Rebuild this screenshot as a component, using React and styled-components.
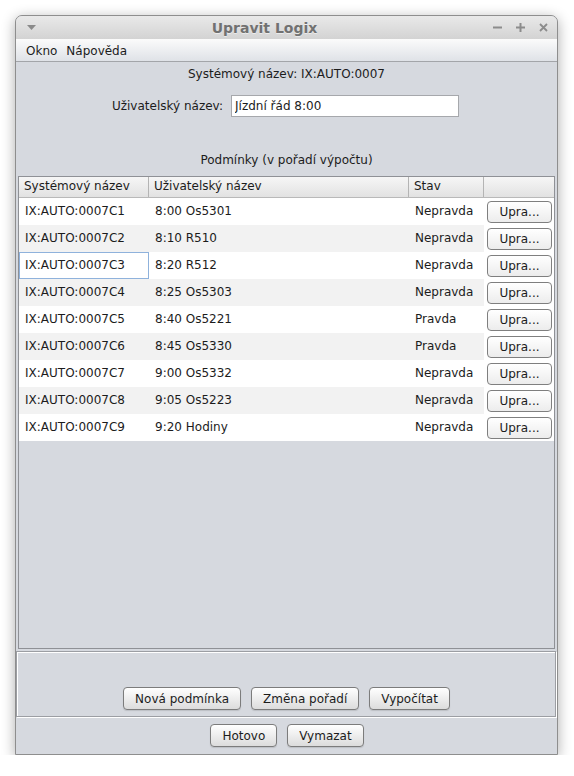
import React from "react";
import styled, { createGlobalStyle } from "styled-components";

const conditions = [
  { id: "IX:AUTO:0007C1", name: "8:00 Os5301", state: "Nepravda" },
  { id: "IX:AUTO:0007C2", name: "8:10 R510", state: "Nepravda" },
  { id: "IX:AUTO:0007C3", name: "8:20 R512", state: "Nepravda", focused: true },
  { id: "IX:AUTO:0007C4", name: "8:25 Os5303", state: "Nepravda" },
  { id: "IX:AUTO:0007C5", name: "8:40 Os5221", state: "Pravda" },
  { id: "IX:AUTO:0007C6", name: "8:45 Os5330", state: "Pravda" },
  { id: "IX:AUTO:0007C7", name: "9:00 Os5332", state: "Nepravda" },
  { id: "IX:AUTO:0007C8", name: "9:05 Os5223", state: "Nepravda" },
  { id: "IX:AUTO:0007C9", name: "9:20 Hodiny", state: "Nepravda" },
];

const columns = ["Systémový název", "Uživatelský název", "Stav", ""];

const App = () => {
  return (
    <>
      <GlobalStyle />
      <Stage>
        <Frame>
          <TitleBar>
            <TitleLeft>
              <svg width="9" height="6" viewBox="0 0 9 6">
                <path d="M0 0 L9 0 L4.5 5 Z" fill="#8a8a8a" />
              </svg>
            </TitleLeft>
            <TitleText>Upravit Logix</TitleText>
            <TitleControls>
              <svg width="9" height="9" viewBox="0 0 9 9">
                <path d="M0 4.5 H9" stroke="#8c8c8c" strokeWidth="2" />
              </svg>
              <svg width="9" height="9" viewBox="0 0 9 9">
                <path d="M0 4.5 H9 M4.5 0 V9" stroke="#8c8c8c" strokeWidth="2" />
              </svg>
              <svg width="9" height="9" viewBox="0 0 9 9">
                <path d="M1 1 L8 8 M8 1 L1 8" stroke="#8c8c8c" strokeWidth="1.8" />
              </svg>
            </TitleControls>
          </TitleBar>

          <MenuBar>
            <MenuItem>Okno</MenuItem>
            <MenuItem>Nápověda</MenuItem>
          </MenuBar>

          <Content>
            <SystemRow>Systémový název: IX:AUTO:0007</SystemRow>
            <FieldRow>
              <FieldLabel>Uživatelský název:</FieldLabel>
              <TextField defaultValue="Jízdní řád 8:00" />
            </FieldRow>
            <Caption>Podmínky (v pořadí výpočtu)</Caption>

            <ScrollPane>
              <HeaderRow>
                {columns.map((c, i) => (
                  <HeaderCell key={i} $w={widths[i]}>
                    {c}
                  </HeaderCell>
                ))}
              </HeaderRow>
              {conditions.map((row, i) => (
                <Row key={row.id} $alt={i % 2 === 1}>
                  <Cell $w={widths[0]} $focused={row.focused}>
                    {row.id}
                  </Cell>
                  <Cell $w={widths[1]}>{row.name}</Cell>
                  <Cell $w={widths[2]}>{row.state}</Cell>
                  <ButtonCell $w={widths[3]}>
                    <EditButton>Upra...</EditButton>
                  </ButtonCell>
                </Row>
              ))}
            </ScrollPane>

            <ActionPanel>
              <Button>Nová podmínka</Button>
              <Button>Změna pořadí</Button>
              <Button>Vypočítat</Button>
            </ActionPanel>

            <Footer>
              <Button>Hotovo</Button>
              <Button>Vymazat</Button>
            </Footer>
          </Content>
        </Frame>
      </Stage>
    </>
  );
};

export default App;

const widths = [130, 260, 75, 70];

const GlobalStyle = createGlobalStyle`
  html, body {
    margin: 0;
    background: #ffffff;
  }

  body {
    font-family: "DejaVu Sans", Verdana, sans-serif;
    font-size: 12px;
    color: #1c1c1c;
  }
`;

const Stage = styled.div`
  padding: 15px 0 0 15px;
`;

const Frame = styled.div`
  width: 543px;
  height: 740px;
  box-sizing: border-box;
  display: flex;
  flex-direction: column;
  overflow: hidden;

  background: #d6d9df;
  border: 1px solid #8e8e8e;
  border-radius: 7px 7px 0 0;
  box-shadow: 0 3px 14px rgba(0, 0, 0, 0.33);
`;

const TitleBar = styled.div`
  height: 23px;
  flex-shrink: 0;
  display: grid;
  grid-template-columns: 1fr auto 1fr;
  align-items: center;

  background: linear-gradient(#e9e9e9, #d3d3d3);
`;

const TitleLeft = styled.div`
  display: flex;
  align-items: center;
  padding-left: 11px;
  padding-top: 1px;
`;

const TitleText = styled.div`
  margin-right: 44px;
  font-size: 14px;
  font-weight: bold;
  color: #717171;
  text-shadow: 0 1px 0 rgba(255, 255, 255, 0.5);
`;

const TitleControls = styled.div`
  display: flex;
  justify-content: flex-end;
  align-items: center;
  column-gap: 14px;
  padding-right: 9px;
`;

const MenuBar = styled.div`
  height: 22px;
  flex-shrink: 0;
  display: flex;
  align-items: center;
  column-gap: 9px;
  padding-left: 10px;

  background: linear-gradient(#fbfbfb, #dfe2e7);
  border-bottom: 1px solid #a3a5a9;
`;

const MenuItem = styled.span`
  line-height: 16px;
  padding-top: 1px;
`;

const Content = styled.div`
  flex: 1;
  display: flex;
  flex-direction: column;
  padding-top: 4px;
`;

const SystemRow = styled.div`
  height: 16px;
  line-height: 16px;
  text-align: center;
`;

const FieldRow = styled.div`
  margin-top: 13px;
  height: 22px;
  display: flex;
  justify-content: center;
  align-items: center;
  column-gap: 8px;
  padding-right: 2px;
`;

const FieldLabel = styled.label`
  line-height: 16px;
`;

const TextField = styled.input`
  width: 228px;
  height: 22px;
  box-sizing: border-box;
  padding: 0 3px;
  margin: 0;

  font: inherit;
  color: #1c1c1c;
  background: #ffffff;
  border: 1px solid #a6a8ac;
  outline: none;
`;

const Caption = styled.div`
  margin-top: 35px;
  height: 16px;
  line-height: 16px;
  text-align: center;
`;

const ScrollPane = styled.div`
  margin: 8px 2px 2px;
  height: 473px;
  box-sizing: border-box;
  border: 1px solid #8f9196;
  background: #d6d9df;
  overflow: hidden;
`;

const HeaderRow = styled.div`
  display: flex;
  height: 21px;
  box-sizing: border-box;
  background: linear-gradient(#f6f6f6, #e2e2e2);
  border-bottom: 1px solid #b9b9b9;
`;

const HeaderCell = styled.div`
  width: ${({ $w }) => $w}px;
  box-sizing: border-box;
  padding-left: 5px;
  line-height: 19px;
  border-right: 1px solid #b4b4b4;

  &:last-child {
    border-right: none;
  }
`;

const Row = styled.div`
  display: flex;
  height: 27px;
  background: ${({ $alt }) => ($alt ? "#f2f2f2" : "#ffffff")};
`;

const Cell = styled.div`
  width: ${({ $w }) => $w}px;
  box-sizing: border-box;
  padding-left: 5px;
  line-height: 25px;
  border: 1px solid ${({ $focused }) => ($focused ? "#8fb2dc" : "transparent")};
  white-space: nowrap;
`;

const ButtonCell = styled.div`
  width: ${({ $w }) => $w}px;
  box-sizing: border-box;
  display: flex;
  align-items: center;
  padding-left: 3px;
  background: #ffffff;
`;

const EditButton = styled.button`
  width: 65px;
  height: 22px;
  margin: 0;
  padding: 0;

  font: inherit;
  color: #1c1c1c;
  background: linear-gradient(#ffffff, #ececec);
  border: 1px solid #7f7f7f;
  border-radius: 4px;
`;

const ActionPanel = styled.div`
  height: 66px;
  box-sizing: border-box;
  margin-right: 1px;
  display: flex;
  justify-content: center;
  align-items: flex-end;
  column-gap: 10px;
  padding: 0 0 6px 1px;

  border: 1px solid #9c9ea3;
  box-shadow: inset 1px 1px 0 #ffffff, 1px 1px 0 #ffffff;
`;

const Footer = styled.div`
  height: 37px;
  display: flex;
  justify-content: center;
  align-items: center;
  column-gap: 10px;
  padding-left: 1px;
`;

const Button = styled.button`
  height: 23px;
  margin: 0;
  padding: 0 11px;

  font: inherit;
  color: #1c1c1c;
  background: linear-gradient(#ffffff, #dcdcdc);
  border: 1px solid #7c7c7c;
  border-radius: 4px;
  box-shadow: 0 1px 1px rgba(0, 0, 0, 0.12);
`;
